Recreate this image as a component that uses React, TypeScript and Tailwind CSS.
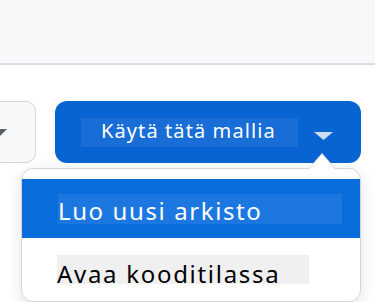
export default function App() {
  return (
    <div className="relative h-[302px] w-[375px] overflow-hidden bg-white font-['Noto_Sans',sans-serif]">
      <div className="h-[65px] border-b-2 border-[#d8dee4] bg-[#f6f8fa]" />

      <div className="mt-[36px] flex items-start gap-[19px]">
        {/* secondary button, mostly off-screen */}
        <div className="-ml-[20px] flex h-[62px] w-[56px] items-center justify-end rounded-[10px] border border-[#d0d7de] bg-[#f6f8fa] pr-[28px]">
          <svg width="16" height="8" viewBox="0 0 16 8" className="mt-[2px] shrink-0">
            <path d="M0 0h16L8 8z" fill="#57606a" />
          </svg>
        </div>

        {/* primary split button */}
        <div className="flex h-[62px] w-[306px] items-center rounded-[12px] bg-[#0864d2] pl-[26px]">
          <span className="flex h-[29px] w-[217px] items-start bg-[#186ed6] pl-[20px] text-[20px] leading-[25px] tracking-[1.1px] whitespace-nowrap text-white">
            Käytä tätä mallia
          </span>
          <svg width="19" height="8" viewBox="0 0 19 8" className="ml-[16px] mt-[8px]">
            <path d="M0 0h19L9.5 8z" fill="#cddcf1" />
          </svg>
        </div>
      </div>

      {/* dropdown menu */}
      <div className="absolute left-[21px] top-[168px] h-[134px] w-[340px] rounded-[12px] border border-[#d0d7de] bg-white pt-[10px] shadow-[0_4px_16px_rgba(31,35,40,0.12)]">
        <div className="absolute -top-[16px] right-[24px] h-0 w-0 border-x-[14px] border-b-[16px] border-x-transparent border-b-[#d0d7de]" />
        <div className="absolute -top-[15px] right-[25px] h-0 w-0 border-x-[13px] border-b-[15px] border-x-transparent border-b-white" />
        <div className="flex h-[59px] items-center bg-[#0a6ddc] pl-[36px]">
          <span className="flex h-[30px] w-[284px] items-start bg-[#1d77e0] text-[24px] leading-[34px] tracking-[1.6px] whitespace-nowrap text-white">
            Luo uusi arkisto
          </span>
        </div>
        <div className="mt-[17px] pl-[35px]">
          <span className="flex h-[29px] w-[252px] items-start bg-[#f0f0f0] text-[24px] leading-[37px] tracking-[1.7px] whitespace-nowrap text-black">
            Avaa kooditilassa
          </span>
        </div>
      </div>
    </div>
  );
}
